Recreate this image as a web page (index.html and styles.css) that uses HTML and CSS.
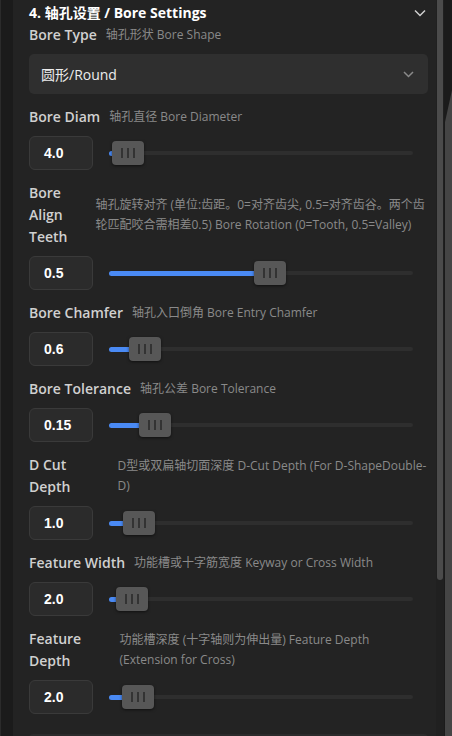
FILE: index.html
```html
<!doctype html>
<html>
<head>
	<meta charset="utf-8">
	<meta name="viewport" content="width=device-width, initial-scale=1.0"/>
	<title>Bore Settings</title>
	<link rel="stylesheet" href="styles.css">
</head>
<body>
<div class="frame">
	<div class="gutter"></div>

	<main class="panel">
		<div class="section-head">
			<h2>4. 轴孔设置 / Bore Settings</h2>
			<svg class="chev" width="12" height="8" viewBox="0 0 12 8"><path d="M1 1.5 L6 6.5 L11 1.5" /></svg>
		</div>

		<div class="field">
			<div class="field-label">
				<span class="name">Bore Type</span>
				<span class="desc">轴孔形状 Bore Shape</span>
			</div>
			<div class="select">
				<span>圆形/Round</span>
				<svg class="chev small" width="11" height="7" viewBox="0 0 11 7"><path d="M1 1 L5.5 5.5 L10 1" /></svg>
			</div>
		</div>

		<div class="field">
			<div class="field-label">
				<span class="name">Bore Diam</span>
				<span class="desc">轴孔直径 Bore Diameter</span>
			</div>
			<div class="control">
				<div class="num">4.0</div>
				<div class="slider">
					<div class="track"><div class="fill" style="width:6.3%"></div></div>
					<div class="thumb" style="left:6.3%"><i></i><i></i><i></i></div>
				</div>
			</div>
		</div>

		<div class="field">
			<div class="field-label">
				<span class="name">Bore Align Teeth</span>
				<span class="desc">轴孔旋转对齐 (单位:齿距。0=对齐齿尖, 0.5=对齐齿谷。两个齿轮匹配咬合需相差0.5) Bore Rotation (0=Tooth, 0.5=Valley)</span>
			</div>
			<div class="control">
				<div class="num">0.5</div>
				<div class="slider">
					<div class="track"><div class="fill" style="width:52.8%"></div></div>
					<div class="thumb" style="left:52.8%"><i></i><i></i><i></i></div>
				</div>
			</div>
		</div>

		<div class="field">
			<div class="field-label">
				<span class="name">Bore Chamfer</span>
				<span class="desc">轴孔入口倒角 Bore Entry Chamfer</span>
			</div>
			<div class="control">
				<div class="num">0.6</div>
				<div class="slider">
					<div class="track"><div class="fill" style="width:11.9%"></div></div>
					<div class="thumb" style="left:11.9%"><i></i><i></i><i></i></div>
				</div>
			</div>
		</div>

		<div class="field">
			<div class="field-label">
				<span class="name">Bore Tolerance</span>
				<span class="desc">轴孔公差 Bore Tolerance</span>
			</div>
			<div class="control">
				<div class="num">0.15</div>
				<div class="slider">
					<div class="track"><div class="fill" style="width:15.2%"></div></div>
					<div class="thumb" style="left:15.2%"><i></i><i></i><i></i></div>
				</div>
			</div>
		</div>

		<div class="field">
			<div class="field-label">
				<span class="name">D Cut Depth</span>
				<span class="desc">D型或双扁轴切面深度 D-Cut Depth (For D-ShapeDouble-D)</span>
			</div>
			<div class="control">
				<div class="num">1.0</div>
				<div class="slider">
					<div class="track"><div class="fill" style="width:9.9%"></div></div>
					<div class="thumb" style="left:9.9%"><i></i><i></i><i></i></div>
				</div>
			</div>
		</div>

		<div class="field">
			<div class="field-label">
				<span class="name">Feature Width</span>
				<span class="desc">功能槽或十字筋宽度 Keyway or Cross Width</span>
			</div>
			<div class="control">
				<div class="num">2.0</div>
				<div class="slider">
					<div class="track"><div class="fill" style="width:7.6%"></div></div>
					<div class="thumb" style="left:7.6%"><i></i><i></i><i></i></div>
				</div>
			</div>
		</div>

		<div class="field">
			<div class="field-label">
				<span class="name">Feature Depth</span>
				<span class="desc">功能槽深度 (十字轴则为伸出量) Feature Depth (Extension for Cross)</span>
			</div>
			<div class="control">
				<div class="num">2.0</div>
				<div class="slider">
					<div class="track"><div class="fill" style="width:9.6%"></div></div>
					<div class="thumb" style="left:9.6%"><i></i><i></i><i></i></div>
				</div>
			</div>
		</div>

		<div class="next-section"></div>
	</main>

	<div class="scroll"><div class="scroll-thumb"></div></div>
	<div class="outer"><div class="outer-thumb"></div></div>
</div>
</body>
</html>
```

FILE: styles.css
```css
html, body {
	margin: 0;
	height: 100%;
}
body {
	background: #1b1b1b;
	font-family: "Open Sans", "Noto Sans CJK SC", sans-serif;
	color: #d2d2d2;
	overflow: hidden;
}
.frame {
	display: flex;
	height: 736px;
}
.gutter {
	width: 12px;
	border-left: 1px solid #2b2b2b;
	background: #1b1b1b;
}
.panel {
	flex: 1;
	background: #232323;
	padding: 0 8px 0 16px;
	overflow: hidden;
}
.section-head {
	display: flex;
	align-items: center;
	justify-content: space-between;
	padding-top: 2px;
	height: 22px;
}
.section-head h2 {
	margin: 0;
	font-size: 14px;
	font-weight: 700;
	line-height: 22px;
	color: #ffffff;
}
.chev {
	margin-right: 2px;
	fill: none;
	stroke: #cfcfcf;
	stroke-width: 1.5;
}
.chev.small {
	margin-right: 0;
	stroke: #8a8a8a;
}
.field {
	margin-bottom: 12px;
}
.field-label {
	display: flex;
	align-items: center;
	gap: 9px;
	margin-bottom: 8px;
}
.name {
	font-size: 14px;
	font-weight: 600;
	line-height: 22px;
	color: #d0d0d0;
}
.desc {
	font-size: 12px;
	line-height: 20px;
	color: #8a8a8a;
}
.select {
	display: flex;
	align-items: center;
	justify-content: space-between;
	height: 40px;
	padding: 0 14px 0 12px;
	background: #2f2f2f;
	border-radius: 5px;
	font-size: 14px;
	color: #ececec;
}
.control {
	display: flex;
	align-items: center;
	gap: 16px;
}
.num {
	box-sizing: border-box;
	width: 64px;
	height: 34px;
	padding-left: 14px;
	border: 1px solid #3a3a3a;
	border-radius: 6px;
	background: #2b2b2b;
	font-family: "Liberation Sans", Arial, sans-serif;
	font-weight: 700;
	font-size: 14px;
	line-height: 32px;
	color: #ffffff;
}
.slider {
	flex: 1;
	position: relative;
	display: flex;
	align-items: center;
	height: 24px;
	margin-right: 15px;
}
.track {
	flex: 1;
	height: 4px;
	background: #2e2e2e;
	border-radius: 2px;
}
.fill {
	height: 5px;
	margin-top: -0.5px;
	background: #4a8af4;
	border-radius: 3px;
}
.thumb {
	position: absolute;
	top: 0;
	width: 32px;
	height: 24px;
	transform: translateX(-50%);
	background: #575757;
	border-radius: 4px;
	box-shadow: 0 1px 3px rgba(0, 0, 0, 0.55);
	display: flex;
	align-items: center;
	justify-content: center;
	gap: 4px;
}
.thumb i {
	width: 2px;
	height: 10px;
	background: #333333;
}
.next-section {
	margin-top: 20px;
	height: 20px;
	background: #2b2b2b;
	border-radius: 4px 4px 0 0;
}
.scroll {
	width: 8px;
	background: #202020;
}
.scroll-thumb {
	width: 6px;
	margin-left: 1px;
	height: 580px;
	background: #4b4b4b;
	border-radius: 0 0 3px 3px;
}
.outer {
	width: 8px;
	background: #1b1b1b;
}
.outer-thumb {
	width: 7px;
	margin-left: 1px;
	margin-top: 90px;
	height: 646px;
	background: #454545;
	clip-path: polygon(100% 0, 100% 100%, 0 100%, 0 32px);
}
```
